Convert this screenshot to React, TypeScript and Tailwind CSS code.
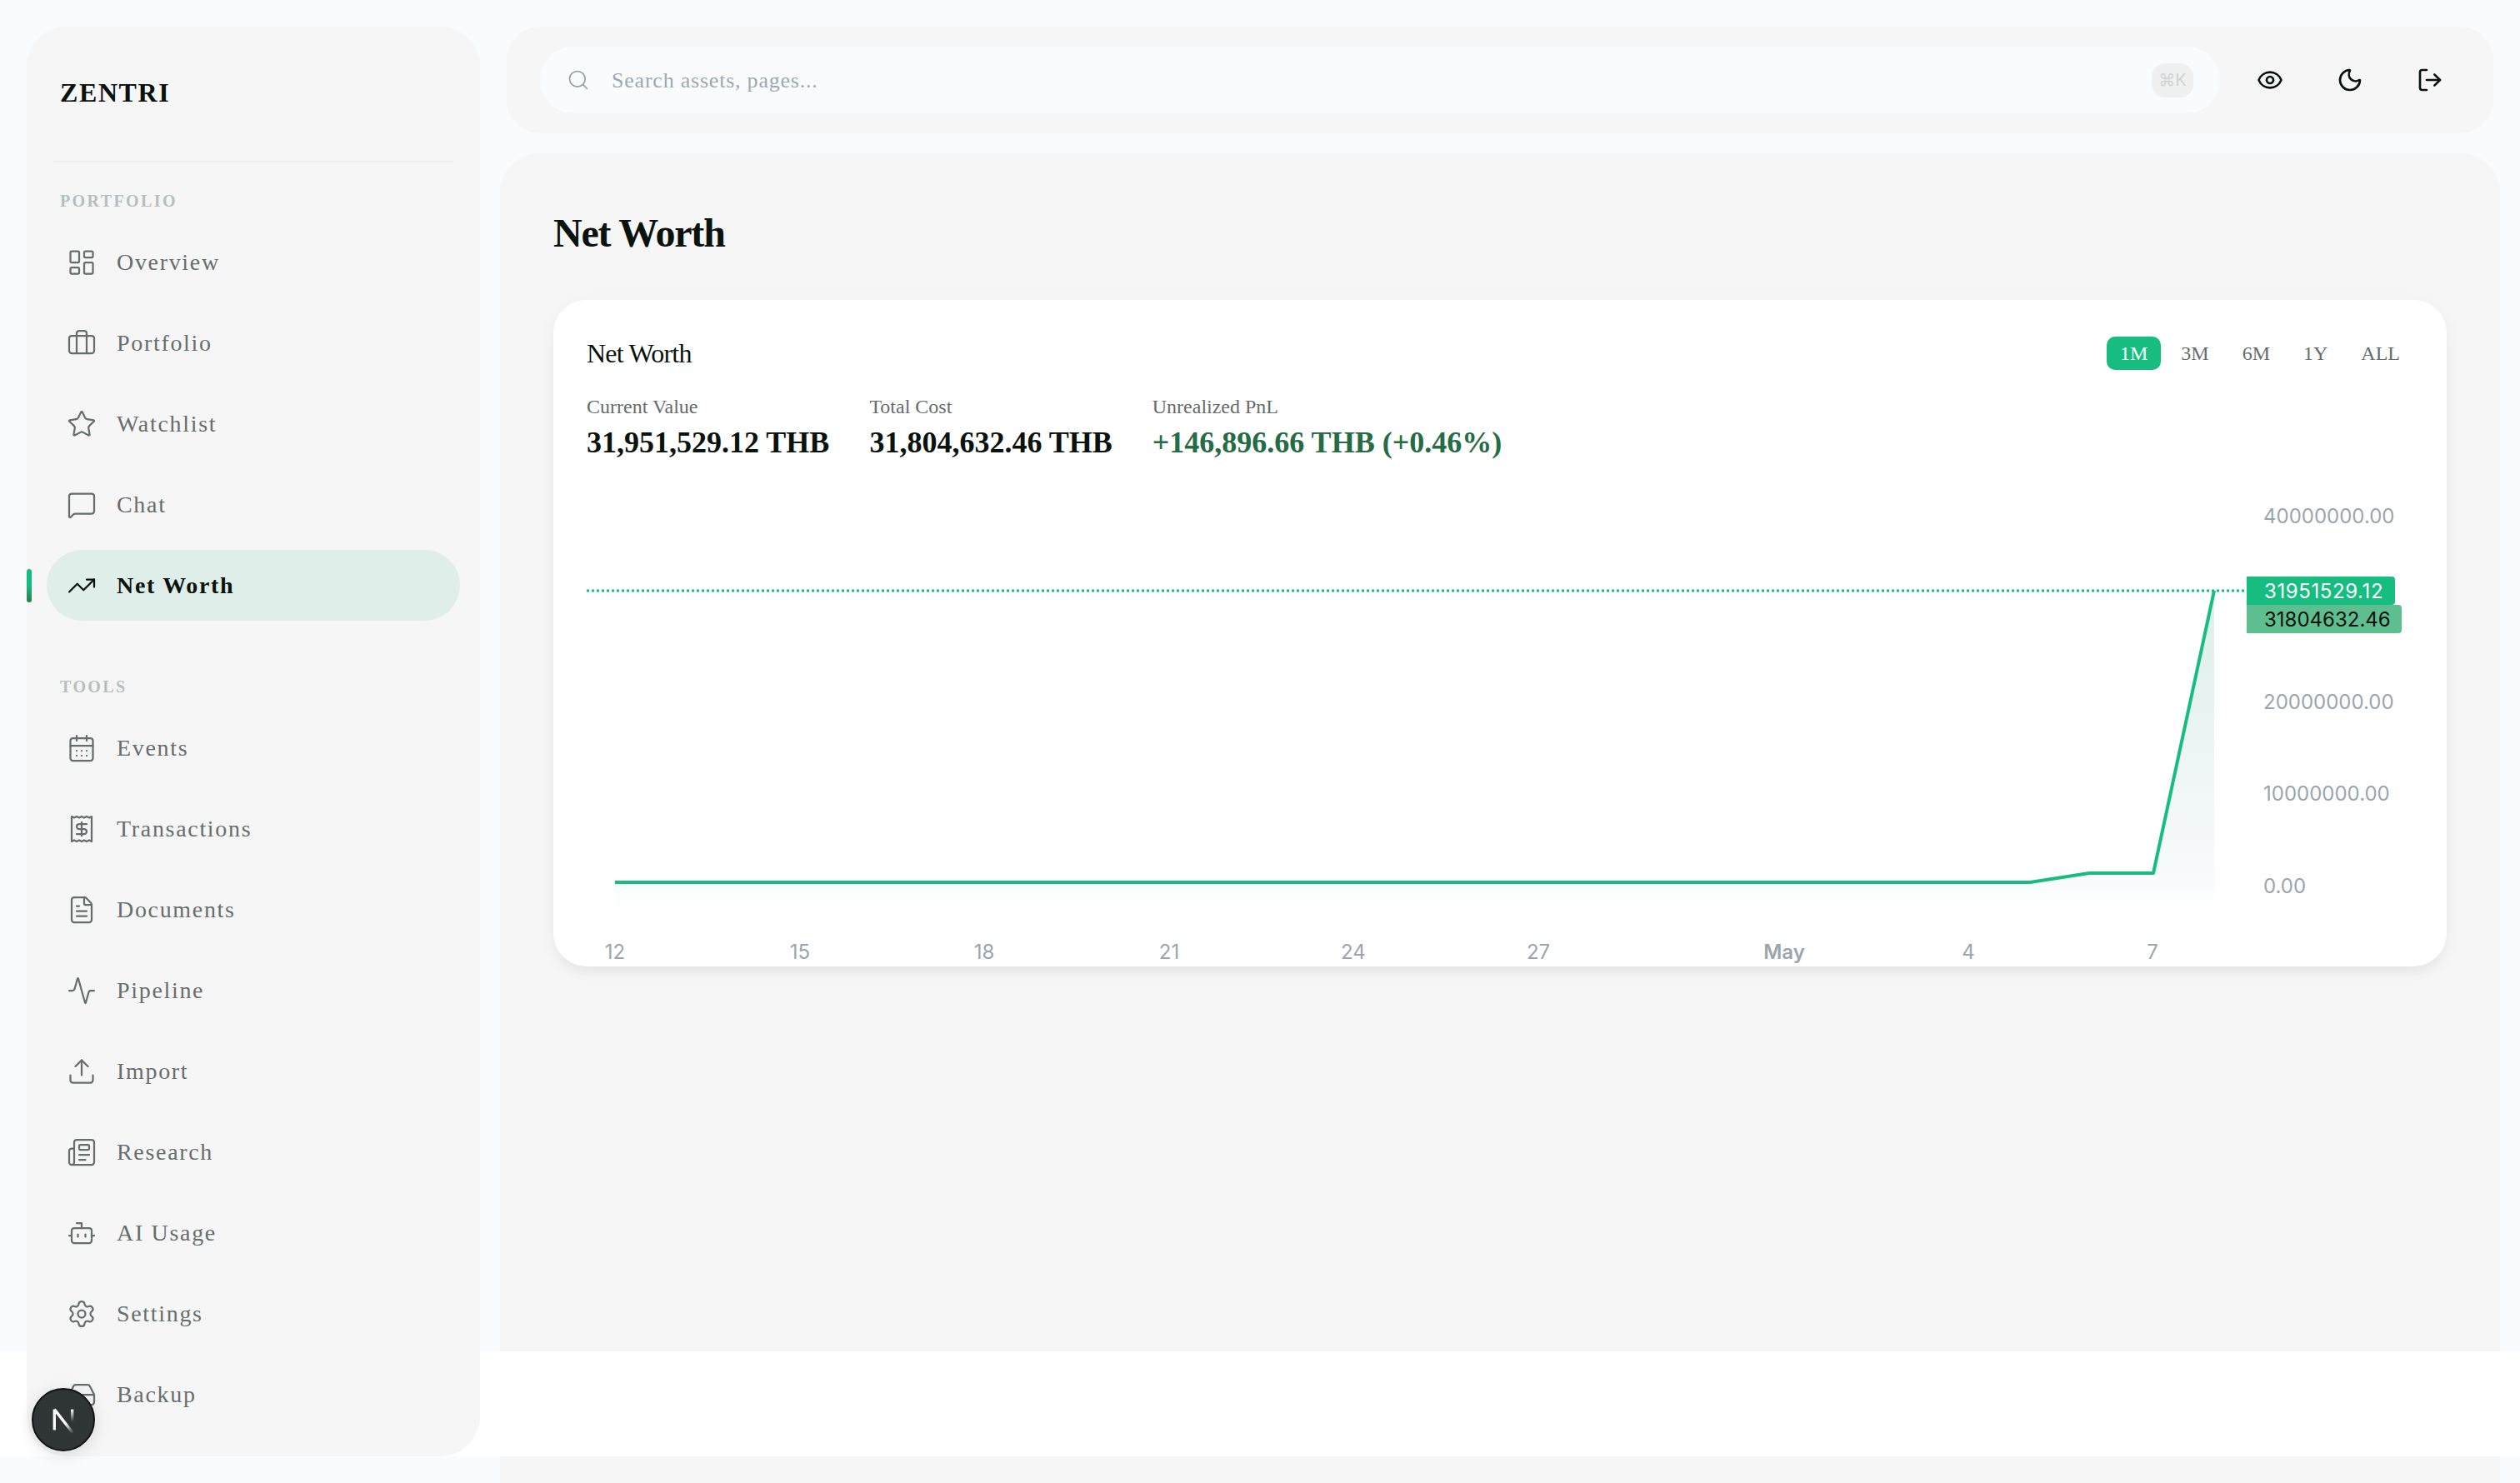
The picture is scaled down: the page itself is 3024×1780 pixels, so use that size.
import React from "react";
import {
  LayoutDashboard, Briefcase, Star, MessageSquare, TrendingUp, CalendarDays, Receipt, FileText,
  Activity, Upload, Newspaper, Bot, Settings, HardDrive, Search, Eye, Moon, LogOut,
} from "lucide-react";

const serif = "font-['Liberation_Serif',serif]";

function NavItem({ icon: Icon, label, active }: { icon: React.ElementType; label: string; active?: boolean }) {
  return (
    <div className={"relative flex h-[85px] items-center gap-6 rounded-full px-6 text-[28px] tracking-[0.06em] " + (active ? "bg-[#dfeee8] font-bold text-[#0a120e]" : "text-[#666d6d]")}>
      <Icon className="size-9 shrink-0" strokeWidth={1.5} />
      <span>{label}</span>
      {active && <span className="absolute left-[-24px] top-[23px] h-10 w-1.5 rounded-full bg-gradient-to-b from-[#17bc80] via-[#17bc80] to-[#2a7a4f]" />}
    </div>
  );
}

function SectionLabel({ children }: { children: React.ReactNode }) {
  return <div className="mb-4 ml-4 text-[20px] font-bold leading-[30px] tracking-[0.12em] text-[#b4bfc0]">{children}</div>;
}

function Stat({ label, value, color }: { label: string; value: string; color: string }) {
  return (
    <div>
      <div className="text-[24px] leading-9 text-[#666b6b]">{label}</div>
      <div className={"mt-[5px] text-[36px] font-bold leading-10 " + color}>{value}</div>
    </div>
  );
}

function Chart() {
  const line = "738,1059 2436,1059 2507,1048 2584,1048 2657,709";
  const xTicks: [string, number, boolean?][] = [
    ["12", 738], ["15", 960], ["18", 1181], ["21", 1403], ["24", 1624], ["27", 1846], ["May", 2141, true], ["4", 2362], ["7", 2583],
  ];
  const yTicks: [string, number][] = [["40000000.00", 619], ["20000000.00", 842], ["10000000.00", 952], ["0.00", 1063]];
  return (
    <svg viewBox="704 590 2232 570" className="mt-[39px] h-[570px] w-[2232px] font-['Inter',sans-serif]">
      <defs>
        <linearGradient id="area" x1="0" y1="709" x2="0" y2="1106" gradientUnits="userSpaceOnUse">
          <stop offset="0" stopColor="#dcefe8" />
          <stop offset="0.5" stopColor="#eef5f5" />
          <stop offset="0.9" stopColor="#f9fbfd" />
          <stop offset="0.91" stopColor="#fcfdfd" />
          <stop offset="1" stopColor="#fefefe" />
        </linearGradient>
      </defs>
      <polygon points={`738,1106 ${line} 2657,1106`} fill="url(#area)" />
      <line x1="704" y1="709" x2="2693" y2="709" stroke="#17bc80" strokeWidth="3" strokeDasharray="3 3" />
      <polyline points={line} fill="none" stroke="#17bc80" strokeWidth="4" strokeLinejoin="round" />
      {xTicks.map(([t, x, bold]) => (
        <text key={t} x={x} y={1151} textAnchor="middle" fontSize="24" fontWeight={bold ? 600 : 400} fill="#9aa5ae">{t}</text>
      ))}
      {yTicks.map(([t, y]) => (
        <text key={t} x={2716} y={y + 9} fontSize="24" fill="#9aa5ae">{t}</text>
      ))}
      <path d="M2696 726H2878a4 4 0 0 1 4 4V756a4 4 0 0 1-4 4H2696Z" fill="#5dbf8f" />
      <path d="M2696 692H2870a4 4 0 0 1 4 4V722a4 4 0 0 1-4 4H2696Z" fill="#17bc80" />
      <text x={2717} y={718} fontSize="24" letterSpacing="0.6" fill="#ffffff">31951529.12</text>
      <text x={2717} y={752} fontSize="24" fill="#0a120e">31804632.46</text>
    </svg>
  );
}

export default function App() {
  const tools: [React.ElementType, string][] = [
    [CalendarDays, "Events"], [Receipt, "Transactions"], [FileText, "Documents"], [Activity, "Pipeline"],
    [Upload, "Import"], [Newspaper, "Research"], [Bot, "AI Usage"], [Settings, "Settings"], [HardDrive, "Backup"],
  ];
  return (
    <div className={"relative flex h-[1780px] w-[3024px] overflow-hidden bg-[#fafbfd] " + serif}>
      {/* Sidebar */}
      <aside className="relative z-10 ml-8 mt-8 h-[1716px] w-[544px] shrink-0 rounded-[48px] bg-[#f6f6f6] px-6">
        <div className="ml-4 pt-[55px] text-[32px] font-bold leading-12 tracking-[0.05em] text-[#0a120e]">ZENTRI</div>
        <div className="mx-2 mt-[58px] h-0.5 bg-[#f0f0f0]" />
        <div className="mt-[31px]">
          <SectionLabel>PORTFOLIO</SectionLabel>
          <div className="flex flex-col gap-3">
            <NavItem icon={LayoutDashboard} label="Overview" />
            <NavItem icon={Briefcase} label="Portfolio" />
            <NavItem icon={Star} label="Watchlist" />
            <NavItem icon={MessageSquare} label="Chat" />
            <NavItem icon={TrendingUp} label="Net Worth" active />
          </div>
        </div>
        <div className="mt-[64px]">
          <SectionLabel>TOOLS</SectionLabel>
          <div className="flex flex-col gap-3">
            {tools.map(([icon, label]) => <NavItem key={label} icon={icon} label={label} />)}
          </div>
        </div>
      </aside>

      {/* Right column */}
      <div className="flex min-w-0 flex-1 flex-col">
        <header className="ml-8 mr-8 mt-8 flex h-32 shrink-0 items-center rounded-[40px] bg-[#f6f6f6] pl-10 pr-9">
          <div className="flex h-20 flex-1 items-center rounded-[40px] bg-[#fafbfd] pl-8 pr-8">
            <Search className="size-7 text-[#93a3ab]" strokeWidth={1.5} />
            <span className="ml-[26px] text-[26px] tracking-[0.03em] text-[#9aa9b2]">Search assets, pages...</span>
            <span className="ml-auto flex h-[41px] w-[50px] items-center justify-center rounded-2xl bg-[#f0f0f0] font-['Inter',sans-serif] text-[20px] text-[#ccd5d5]">⌘K</span>
          </div>
          <div className="ml-5 flex gap-4 text-[#0a120e]">
            <button className="flex h-20 w-20 items-center justify-center"><Eye className="size-8" /></button>
            <button className="flex h-20 w-20 items-center justify-center"><Moon className="size-8" /></button>
            <button className="flex h-20 w-20 items-center justify-center"><LogOut className="size-8" /></button>
          </div>
        </header>

        <main className="ml-6 mr-6 mt-6 flex-1 rounded-t-[48px] bg-[#f6f6f6] px-16 pt-[66px]">
          <h1 className="text-[48px] font-bold leading-[60px] tracking-[-0.025em] text-[#0a120e]">Net Worth</h1>
          <section className="mt-[50px] h-[800px] overflow-hidden rounded-[40px] bg-white pt-10 shadow-[0_10px_15px_-3px_rgba(0,0,0,0.05),0_4px_24px_rgba(0,0,0,0.03)]">
            <div className="flex h-12 items-center justify-between pl-10 pr-10">
              <div className="text-[32px] tracking-[-0.025em] text-[#0a120e]">Net Worth</div>
              <div className="flex gap-2 text-[24px] text-[#666b6b]">
                <button className="flex h-10 items-center rounded-[10px] bg-[#17bc80] px-4 text-white">1M</button>
                <button className="flex h-10 items-center px-4">3M</button>
                <button className="flex h-10 items-center px-4">6M</button>
                <button className="flex h-10 items-center px-4">1Y</button>
                <button className="flex h-10 items-center px-4">ALL</button>
              </div>
            </div>
            <div className="mt-[22px] flex gap-12 pl-10">
              <Stat label="Current Value" value="31,951,529.12 THB" color="text-[#0a120e]" />
              <Stat label="Total Cost" value="31,804,632.46 THB" color="text-[#0a120e]" />
              <Stat label="Unrealized PnL" value="+146,896.66 THB (+0.46%)" color="text-[#256b45]" />
            </div>
            <div className="ml-10"><Chart /></div>
          </section>
        </main>
      </div>

      {/* White strip lying over the page, behind the sidebar */}
      <div className="absolute inset-x-0 top-[1622px] h-[126px] bg-white" />

      {/* Dev badge */}
      <div className="absolute left-[38px] top-[1666px] z-20 flex size-[76px] items-center justify-center rounded-full border-2 border-[#111414] bg-[#2f3434] shadow-[0_4px_20px_rgba(0,0,0,0.12)]">
        <svg viewBox="0 0 32 32" className="size-9" fill="none">
          <defs>
            <linearGradient id="nfade" x1="8" y1="6" x2="26" y2="29" gradientUnits="userSpaceOnUse">
              <stop offset="0.6" stopColor="#ffffff" />
              <stop offset="1" stopColor="#ffffff" stopOpacity="0.1" />
            </linearGradient>
            <linearGradient id="nfade2" x1="0" y1="5" x2="0" y2="18" gradientUnits="userSpaceOnUse">
              <stop offset="0" stopColor="#ffffff" />
              <stop offset="1" stopColor="#ffffff" stopOpacity="0" />
            </linearGradient>
          </defs>
          <path d="M6.5 5v22" stroke="#ffffff" strokeWidth="3" />
          <path d="M6.5 5L26 30" stroke="url(#nfade)" strokeWidth="3" />
          <path d="M25.5 5v16" stroke="url(#nfade2)" strokeWidth="3" />
        </svg>
      </div>
    </div>
  );
}
